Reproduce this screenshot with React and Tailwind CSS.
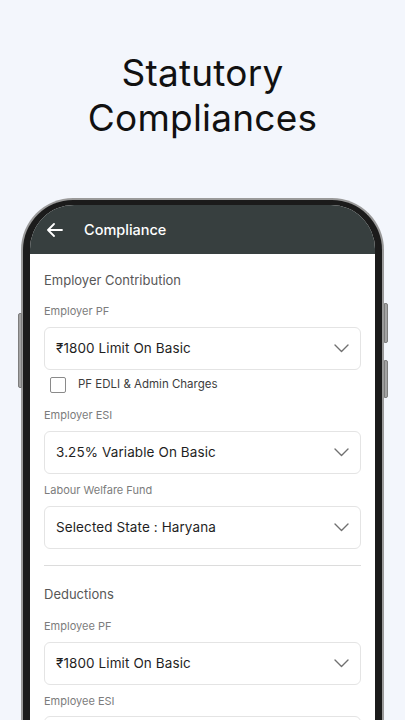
import React from 'react';

const Chevron = () => (
  <svg width="15" height="9" viewBox="0 0 15 9" fill="none" className="shrink-0">
    <path d="M1 1l6.5 6.5L14 1" stroke="#707070" strokeWidth="1.4" strokeLinecap="round" strokeLinejoin="round" />
  </svg>
);

const Select = ({ value, className = '' }) => (
  <div className={`flex items-center justify-between h-[43px] rounded-[6px] border border-[#e4e4e4] bg-white pl-[11px] pr-[11px] ${className}`}>
    <span className="text-[13.5px] text-[#1f1f1f] tracking-[0.1px]">{value}</span>
    <Chevron />
  </div>
);

const Label = ({ children, className = '' }) => (
  <p className={`text-[11px] leading-[16px] text-[#7c7c7c] ${className}`}>{children}</p>
);

const SectionTitle = ({ children, className = '' }) => (
  <p className={`text-[13px] leading-[20px] text-[#575757] ${className}`}>{children}</p>
);

export default function App() {
  return (
    <div className="h-[720px] overflow-hidden bg-[#f3f6fc]" style={{ fontFamily: 'Inter, "Noto Sans", sans-serif' }}>
      {/* Heading */}
      <h1 className="pt-[50px] text-center text-[37px] leading-[45px] font-normal text-[#111] tracking-[0.2px]">
        Statutory
        <br />
        Compliances
      </h1>

      {/* Phone */}
      <div className="relative mx-[21px] mt-[58px]">
        <div className="absolute left-[-3px] top-[115px] w-[4px] h-[75px] rounded-l-[2px] bg-[#a3a3a3] border border-[#7d7d7d]" />
        <div className="absolute right-[-4px] top-[105px] w-[4px] h-[40px] rounded-r-[2px] bg-[#a3a3a3] border border-[#7d7d7d]" />
        <div className="absolute right-[-4px] top-[162px] w-[4px] h-[38px] rounded-r-[2px] bg-[#a3a3a3] border border-[#7d7d7d]" />

        <div className="rounded-t-[52px] border-[2px] border-b-0 border-[#9a9a9a] bg-[#1b1b1b] px-[7px] pt-[5px] h-[540px]">
          <div className="rounded-t-[44px] overflow-hidden bg-white h-full">
            {/* App bar */}
            <div className="flex items-center h-[49px] bg-[#373f3f] pl-[17px]">
              <svg width="16" height="14" viewBox="0 0 16 14" fill="none">
                <path d="M15 7H1.5M7 1L1 7l6 6" stroke="#fff" strokeWidth="1.8" strokeLinecap="round" strokeLinejoin="round" />
              </svg>
              <span className="ml-[21px] text-[14.5px] font-medium text-white">Compliance</span>
            </div>

            {/* Form */}
            <div className="px-[14px] pt-[16px]">
              <SectionTitle>Employer Contribution</SectionTitle>

              <Label className="mt-[13px]">Employer PF</Label>
              <Select className="mt-[8px]" value="₹1800 Limit On Basic" />

              <div className="flex items-center mt-[7px] h-[16px] pl-[6px]">
                <span className="w-[16px] h-[16px] rounded-[2px] border-[1.5px] border-[#8a8a8a]" />
                <span className="ml-[12px] text-[11.5px] text-[#3d3d3d]">PF EDLI &amp; Admin Charges</span>
              </div>

              <Label className="mt-[14px]">Employer ESI</Label>
              <Select className="mt-[8px]" value="3.25% Variable On Basic" />

              <Label className="mt-[8px]">Labour Welfare Fund</Label>
              <Select className="mt-[8px]" value="Selected State : Haryana" />

              <div className="mt-[16px] h-px bg-[#dcdcdc]" />

              <SectionTitle className="mt-[18px]">Deductions</SectionTitle>

              <Label className="mt-[14px]">Employee PF</Label>
              <Select className="mt-[8px]" value="₹1800 Limit On Basic" />

              <Label className="mt-[8px]">Employee ESI</Label>
              <div className="mt-[7px] h-[43px] rounded-[6px] border border-[#e4e4e4] bg-white" />
            </div>
          </div>
        </div>
      </div>
    </div>
  );
}
